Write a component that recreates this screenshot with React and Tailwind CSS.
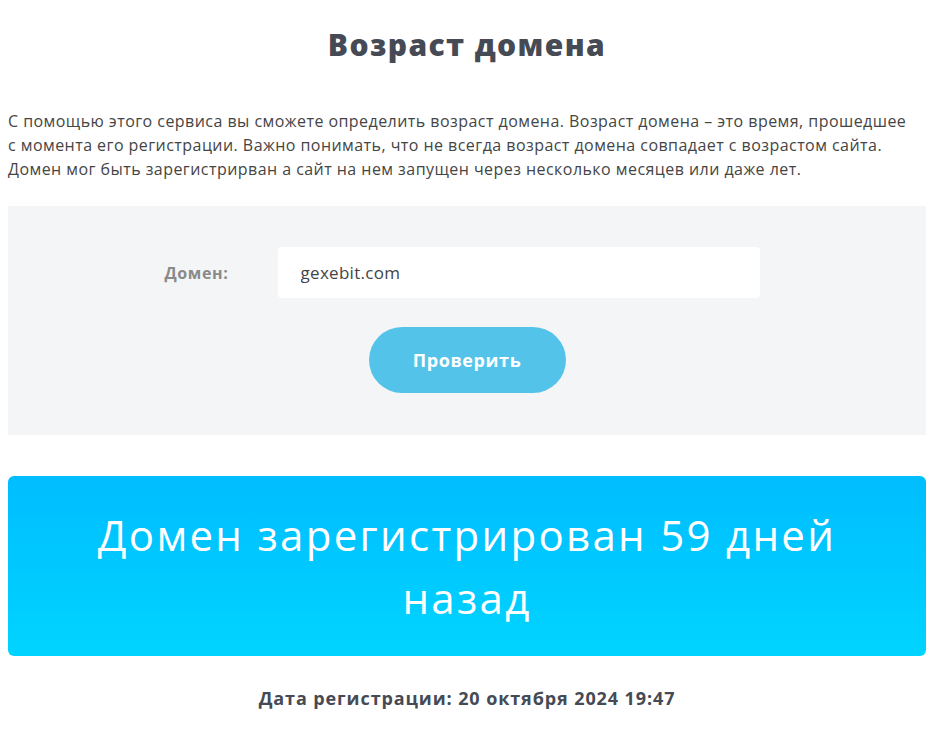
export default function App() {
  return (
    <div className="min-h-screen bg-white pl-2 pr-[14px] text-[#444a55]" style={{ fontFamily: '"Open Sans", "Liberation Sans", sans-serif' }}>
      <h1 className="pt-[25px] text-center text-[30px] font-extrabold leading-[40px] tracking-[1.4px] text-[#454a55]">
        Возраст домена
      </h1>

      <p className="mt-[44px] whitespace-nowrap text-[16px] font-medium leading-[24px] tracking-[0.45px] text-[#454545]">
        С помощью этого сервиса вы сможете определить возраст домена. Возраст домена – это время, прошедшее
        <br />
        с момента его регистрации. Важно понимать, что не всегда возраст домена совпадает с возрастом сайта.
        <br />
        Домен мог быть зарегистрирван а сайт на нем запущен через несколько месяцев или даже лет.
      </p>

      <div className="mt-[25px] flex h-[229px] flex-col items-center bg-[#f3f5f6] pt-[41px]">
        <div className="flex items-center pr-[10px]">
          <label className="w-[113px] text-[16px] font-bold tracking-[0.6px] text-[#8a8a8a]">Домен:</label>
          <input
            className="h-[51px] w-[482px] rounded-sm bg-white px-[23px] text-[17px] tracking-[0.3px] text-[#444] outline-none"
            defaultValue="gexebit.com"
          />
        </div>
        <button className="mt-[29px] h-[66px] w-[197px] rounded-full bg-[#54c3ea] text-[18px] font-bold tracking-[0.6px] text-white">
          Проверить
        </button>
      </div>

      <div className="mt-[41px] flex h-[180px] items-center justify-center rounded-md bg-gradient-to-b from-[#00bdff] to-[#00d4ff] px-[60px] text-center">
        <p className="text-[42px] leading-[63px] tracking-[2.3px] text-white">
          Домен зарегистрирован 59 дней назад
        </p>
      </div>

      <p className="mt-[29px] text-center text-[18px] font-bold tracking-[0.9px] text-[#454a55]">
        Дата регистрации: 20 октября 2024 19:47
      </p>
    </div>
  );
}
